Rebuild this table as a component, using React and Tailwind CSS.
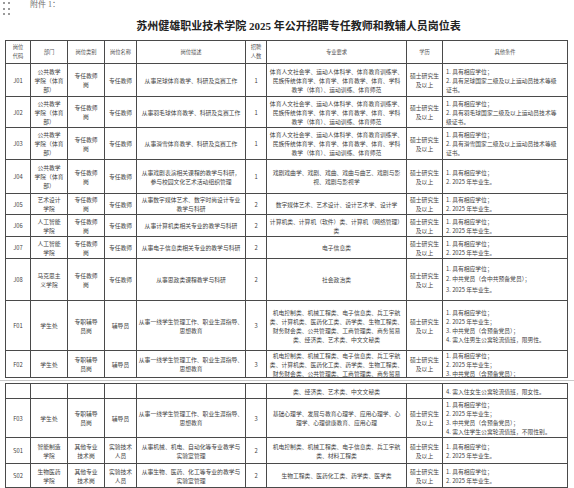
import React from "react";

const COLS = "grid grid-cols-[25px_37px_37px_32px_109px_21px_140px_36px_125px]";
const EDU = ["硕士研究生", "及以上"];
const T = "体育人文社会学、运动人体科学、体育教育训练学、";
const T2 = "民族传统体育学、体育学、体育教学、体育、学科";
const T3 = "教学（体育）、运动训练、体育师范";
const PE = ["公共教学", "学院（体育", "部）"];
const FM = [
  "机电控制类、机械工程类、电子信息类、兵工宇航",
  "类、计算机类、医药化工类、药学类、生物工程类、",
  "财务财会类、公共管理类、工商管理类、商务贸易",
];

const rows1 = [
  { h: "h-[33px]", c: ["J01", PE, ["专任教师", "岗"], ["专任教师"], ["从事足球体育教学、科研及竞赛工作"], "1", [T, T2, T3], EDU, ["1. 具有相应学位；", "2. 具有足球国家二级及以上运动员技术等级", "证书。"]] },
  { h: "h-[31px]", c: ["J02", PE, ["专任教师", "岗"], ["专任教师"], ["从事羽毛球体育教学、科研及竞赛工作"], "1", [T, T2, T3], EDU, ["1. 具有相应学位；", "2. 具有羽毛球国家二级及以上运动员技术等", "级证书。"]] },
  { h: "h-[32px]", c: ["J03", PE, ["专任教师", "岗"], ["专任教师"], ["从事滑雪体育教学、科研及竞赛工作"], "1", [T, T2, T3], EDU, ["1. 具有相应学位；", "2. 具有滑雪国家二级及以上运动员技术等级", "证书。"]] },
  { h: "h-[34px]", c: ["J04", PE, ["专任教师", "岗"], ["专任教师"], ["从事戏剧表演相关课程的教学与科研，", "参与校园文化艺术活动组织管理"], "1", ["戏剧戏曲学、戏剧、戏曲、戏曲与曲艺、戏剧与影", "视、戏剧与影视学"], EDU, ["1. 具有相应学位；", "2. 2025 年毕业生。"]] },
  { h: "h-[21px]", c: ["J05", ["艺术设计", "学院"], ["专任教师", "岗"], ["专任教师"], ["从事数字媒体艺术、数字时尚设计专业", "教学与科研"], "2", ["数字媒体艺术、艺术设计、设计艺术学、设计学"], EDU, ["1. 具有相应学位；", "2. 2025 年毕业生。"]] },
  { h: "h-[22px]", c: ["J06", ["人工智能", "学院"], ["专任教师", "岗"], ["专任教师"], ["从事计算机类相关专业的教学与科研"], "2", ["计算机类、计算机（软件）类、计算机（网络管理）", "类"], EDU, ["1. 具有相应学位；", "2. 2025 年毕业生。"]] },
  { h: "h-[22px]", c: ["J07", ["人工智能", "学院"], ["专任教师", "岗"], ["专任教师"], ["从事电子信息类相关专业的教学与科研"], "2", ["电子信息类"], EDU, ["1. 具有相应学位；", "2. 2025 年毕业生。"]] },
  { h: "h-[42px]", lo: "leading-[10.5px]", c: ["J08", ["马克思主", "义学院"], ["专任教师", "岗"], ["专任教师"], ["从事思政类课程教学与科研"], "2", ["社会政治类"], EDU, ["1. 具有相应学位；", "2. 中共党员（含中共预备党员）；", "3. 2025 年毕业生。"]] },
  { h: "h-[50px]", c: ["F01", ["学生处"], ["专职辅导", "员岗"], ["辅导员"], ["从事一线学生管理工作、职业生涯指导、", "思想教育"], "3", [...FM, "类、经济类、艺术类、中文文秘类"], EDU, ["1. 具有相应学位；", "2. 2025 年毕业生；", "3. 中共党员（含预备党员）；", "4. 需入住男生公寓轮流值班，限男性。"]] },
  { h: "h-[27px]", c: ["F02", ["学生处"], ["专职辅导", "员岗"], ["辅导员"], ["从事一线学生管理工作、职业生涯指导、", "思想教育"], "3", FM, EDU, ["1. 具有相应学位；", "2. 2025 年毕业生；", "3. 中共党员（含预备党员）；"]] },
];

const rows2 = [
  { h: "h-[15px]", c: ["", [], [], [], [], "", ["类、经济类、艺术类、中文文秘类"], [], ["4. 需入住女生公寓轮流值班，限女性。"]] },
  { h: "h-[39px]", c: ["F03", ["学生处"], ["专职辅导", "员岗"], ["辅导员"], ["从事一线学生管理工作、职业生涯指导、", "思想教育"], "3", ["基础心理学、发展与教育心理学、应用心理学、心", "理学、心理健康教育、应用心理"], EDU, ["1. 具有相应学位；", "2. 2025 年毕业生；", "3. 中共党员（含预备党员）；", "4. 需入住学生公寓轮流值班，不限性别。"]] },
  { h: "h-[26px]", c: ["S01", ["智能制造", "学院"], ["其他专业", "技术岗"], ["实验技术", "人员"], ["从事机械、机电、自动化等专业教学与", "实验室管理"], "2", ["机电控制类、机械工程类、电子信息类、兵工宇航", "类、材料工程类"], EDU, ["1. 具有相应学位；", "2. 2025 年毕业生。"]] },
  { h: "h-[24px]", c: ["S02", ["生物医药", "学院"], ["其他专业", "技术岗"], ["实验技术", "人员"], ["从事生物、医药、化工等专业的教学与", "实验室管理"], "2", ["生物工程类、医药化工类、药学类、医学类"], EDU, ["1. 具有相应学位；", "2. 2025 年毕业生。"]] },
];

function Cell({ lines, left, lead }) {
  const arr = Array.isArray(lines) ? lines : [lines];
  return (
    <div
      className={
        "border-r border-b border-[#4a4a4a] flex flex-col justify-center overflow-hidden " +
        (left ? "items-start pl-[3px] text-left " : "items-center text-center ") +
        (lead || "leading-[9px]")
      }
    >
      {arr.map((l, i) => (
        <div key={i} className="whitespace-nowrap">
          {l}
        </div>
      ))}
    </div>
  );
}

function Row({ r }) {
  return (
    <div className={COLS + " " + r.h}>
      {r.c.map((v, i) => (
        <Cell key={i} lines={v} left={i === 8} lead={i === 8 && r.lo ? r.lo : undefined} />
      ))}
    </div>
  );
}

const HEAD = [["岗位", "代码"], ["部门"], ["岗位类别"], ["岗位名称"], ["岗位描述"], ["招聘", "人数"], ["专业要求"], ["学历"], ["其他条件"]];

export default function App() {
  return (
    <div className="w-[574px] h-[488px] overflow-hidden bg-white text-[#3f3f3f]">
      <div className="h-[14px] flex items-start">
        <div className="ml-[3px] mt-[2px] grid grid-cols-[2px_2px] gap-x-[3px] gap-y-[3.5px]">
          {[0, 1, 2, 3, 4, 5].map((i) => (
            <div key={i} className="w-[2px] h-[2px] bg-[#9a9a9a]" />
          ))}
        </div>
        <div className="ml-[20px] text-[8px] leading-[10px] text-[#707070] font-['Liberation_Serif','Noto_Sans_CJK_SC',serif]">
          附件 1：
        </div>
      </div>
      <div className="h-[24px] flex items-center justify-center pl-[23px]">
        <div className="text-[11px] font-bold text-[#222] tracking-[0px] font-['Liberation_Serif','Noto_Sans_CJK_SC',serif]">
          苏州健雄职业技术学院 2025 年公开招聘专任教师和教辅人员岗位表
        </div>
      </div>
      <div className="mt-[2px] ml-[5px] w-[563px] border-l border-t border-[#4a4a4a] text-[5.8px] font-['Noto_Sans_CJK_SC',sans-serif]">
        <div className={COLS + " h-[23px] text-[5.3px] text-[#555]"}>
          {HEAD.map((v, i) => (
            <Cell key={i} lines={v} />
          ))}
        </div>
        {rows1.map((r, i) => (
          <Row key={i} r={r} />
        ))}
      </div>
      <div className="mt-[2px] h-px bg-[#c8c8c8]" />
      <div className="mt-[2px] ml-[5px] w-[563px] border-l border-t border-[#4a4a4a] text-[5.8px] font-['Noto_Sans_CJK_SC',sans-serif]">
        {rows2.map((r, i) => (
          <Row key={i} r={r} />
        ))}
      </div>
    </div>
  );
}
